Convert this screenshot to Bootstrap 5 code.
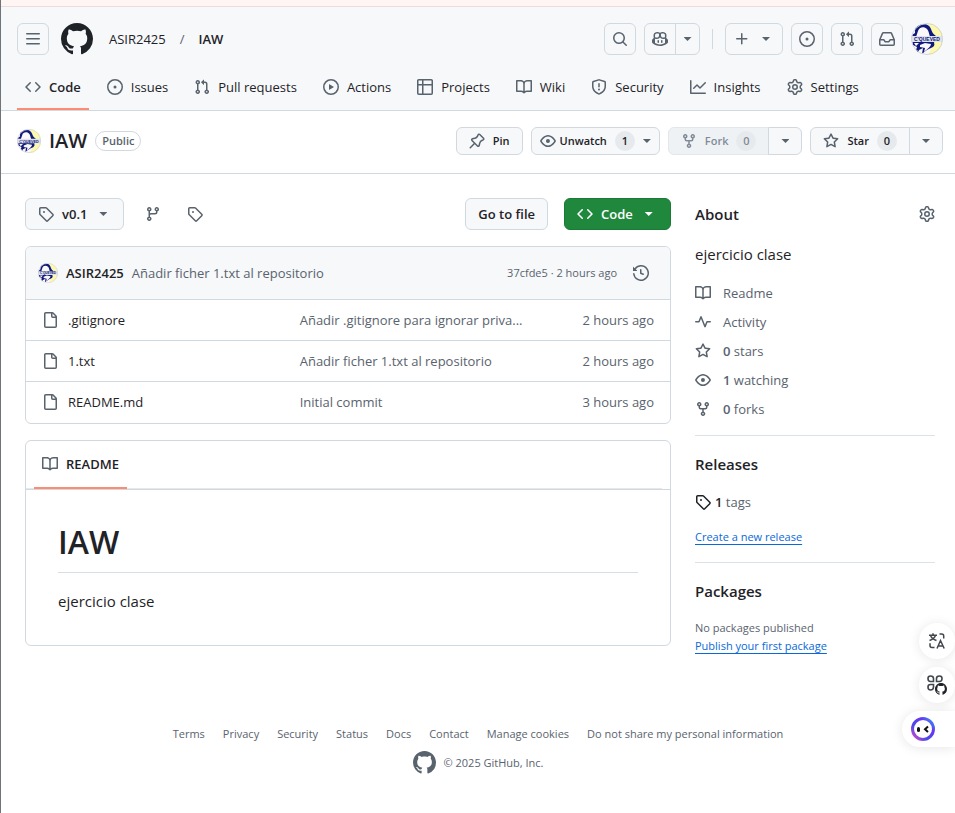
<!DOCTYPE html>
<html lang="en">
<head>
<meta charset="utf-8">
<meta name="viewport" content="width=device-width, initial-scale=1">
<title>ASIR2425/IAW</title>
<link href="https://cdn.jsdelivr.net/npm/bootstrap@5.3.0/dist/css/bootstrap.min.css" rel="stylesheet">
<style>
:root{--fg:#1f2328;--muted:#59636e;--line:#d1d9e0;--soft:#f6f8fa;--accent:#fd8c73;--link:#0969da}
body{font-family:"Open Sans","Noto Sans",sans-serif;font-size:13px;line-height:20px;color:var(--fg);background:#fff;min-height:100vh;border-left:1px solid #707478}
a{color:inherit;text-decoration:none}
svg{display:block;flex-shrink:0;fill:currentColor}
.ic{width:16px;height:16px}
.soft-fg{color:var(--muted)}
.strip{height:7px;background:#fff5f2;border-bottom:1px solid #ecdcdc}
.top-area{background:var(--soft);border-bottom:1px solid var(--line)}
.top-row{padding:16px 12px 10px 16px}
.home-link{margin-left:12px}
.slash{padding:0 14px}
.gh-btn{--bs-btn-padding-x:12px;--bs-btn-padding-y:0;--bs-btn-font-size:13px;--bs-btn-line-height:20px;--bs-btn-font-weight:600;--bs-btn-border-radius:6px;--bs-btn-color:var(--fg);--bs-btn-bg:var(--soft);--bs-btn-border-color:var(--line);--bs-btn-hover-bg:#eff2f5;--bs-btn-hover-border-color:var(--line);--bs-btn-disabled-bg:#eff2f5;--bs-btn-disabled-color:#818b98;--bs-btn-disabled-border-color:#e2e7eb;--bs-btn-disabled-opacity:1;display:inline-flex;align-items:center;justify-content:center;height:32px;white-space:nowrap}
.gh-btn .ic{color:var(--muted)}
.gh-btn:disabled .ic{color:#818b98}
.gh-sm{--bs-btn-font-size:11px;height:28px}
.gh-icon{--bs-btn-padding-x:0;width:32px}
.gh-narrow{--bs-btn-padding-x:0;width:25px}
.gh-arrow{--bs-btn-padding-x:0;width:34px}
.gh-create{gap:12px;padding-left:8px}
.gh-green{--bs-btn-color:#fff;--bs-btn-bg:#1f883d;--bs-btn-border-color:#1a7a36;--bs-btn-hover-color:#fff;--bs-btn-hover-bg:#1c8139;width:107px;justify-content:flex-start}
.gh-green .ic,.gh-green .caret{color:#fff}
.caret{width:8px;height:4px;background:currentColor;clip-path:polygon(0 0,100% 0,50% 100%);color:var(--muted)}
.count{min-width:20px;height:20px;border-radius:10px;background:#e6eaed;text-align:center;padding:0 6px}
.vline{width:1px;height:20px;background:var(--line)}
.repo-tabs{padding:0 8px 0 16px;gap:10px}
.repo-tabs a{display:flex;align-items:center;gap:8px;height:45px;padding:0 8px;border-bottom:2px solid transparent}
.repo-tabs a.current{border-color:var(--accent);font-weight:600}
.repo-tabs .ic{color:var(--muted)}
.repo-head{padding:16px 12px 18px 16px;border-bottom:1px solid var(--line)}
.repo-name{font-size:20px;line-height:28px;font-weight:600}
.pill{border:1px solid var(--line);border-radius:10px;padding:0 6px;line-height:18px;font-size:11px;font-weight:600;color:var(--muted)}
.main-area{padding:24px 20px 0 24px;gap:24px}
.side{width:240px;flex-shrink:0}
.ref-link{width:42px;display:flex;justify-content:center}
.box{border:1px solid var(--line);border-radius:6px}
.commit-row{background:var(--soft);border-radius:5px 5px 0 0;padding:16px 21px 16px 12px}
.fs-tiny{font-size:11px;line-height:18px}
.files{width:100%;table-layout:fixed}
.files td{height:41px;border-top:1px solid var(--line);padding:0;white-space:nowrap}
.col-name{width:42.5%}.col-age{width:20%}
.files .name-cell{padding-left:16px}
.name-cell a{display:flex;align-items:center;gap:10px}
.files .age-cell{padding-right:16px;text-align:right}
.rm-head{border-bottom:1px solid var(--line);padding-left:8px;padding-right:8px}
.rm-tabs{border-bottom:1px solid #e4e9ed;margin-left:-8px;padding-left:8px}
.rm-tabs a{display:inline-flex;align-items:center;gap:8px;height:48px;padding:0 8px;border-bottom:2px solid var(--accent);margin-bottom:-1px;font-weight:600}
.rm-body{padding:32px}
.rm-body h1{font-size:32px;line-height:40px;font-weight:600;padding-bottom:10px;border-bottom:1px solid #d8dee4;margin:0 0 16px}
.fs-mid{font-size:15px;line-height:24px}
.about-text{margin:16px 0 17px}
.side h2{font-size:15px;line-height:24px;font-weight:600;margin:0}
.side-part{border-top:1px solid #dde2e7;padding-top:16px;margin-top:16px}
.facts{gap:9px}
.facts a{display:flex;gap:12px;align-items:center}
.u-link{color:var(--link);text-decoration:underline;text-underline-offset:3px}
.foot{padding:70px 0 40px}
.foot nav{gap:18px}
.float-dock{position:fixed;right:0;top:623px;width:53px}
.bubble{display:flex;align-items:center;justify-content:center;border:0;background:#fff;padding:0;width:36px;height:36px;border-radius:18px;box-shadow:0 1px 12px rgba(0,0,0,.1);color:#42474d}
.bubble.wide{width:53px;border-radius:18px 0 0 18px;justify-content:flex-start;padding-left:8px}
.line-art{fill:none;stroke:currentColor;stroke-width:1.5}
</style>
</head>
<body>
<svg width="0" height="0" class="position-absolute" aria-hidden="true">
<defs>
<linearGradient id="ring" x1="0" y1="1" x2="1" y2="0"><stop offset="0" stop-color="#e645c8"/><stop offset=".35" stop-color="#4a4ae8"/><stop offset=".7" stop-color="#6a35f2"/><stop offset="1" stop-color="#2aa5f5"/></linearGradient>
<clipPath id="round"><circle cx="16" cy="16" r="16"/></clipPath>
</defs>
<symbol id="bars" viewBox="0 0 16 16"><path d="M1 2.75A.75.75 0 0 1 1.75 2h12.5a.75.75 0 0 1 0 1.5H1.75A.75.75 0 0 1 1 2.75Zm0 5A.75.75 0 0 1 1.75 7h12.5a.75.75 0 0 1 0 1.5H1.75A.75.75 0 0 1 1 7.75ZM1.75 12h12.5a.75.75 0 0 1 0 1.5H1.75a.75.75 0 0 1 0-1.5Z"/></symbol>
<symbol id="octocat" viewBox="0 0 16 16"><path d="M8 0c4.42 0 8 3.58 8 8a8.013 8.013 0 0 1-5.45 7.59c-.4.08-.55-.17-.55-.38 0-.27.01-1.13.01-2.2 0-.75-.25-1.23-.54-1.48 1.78-.2 3.65-.88 3.65-3.95 0-.88-.31-1.59-.82-2.15.08-.2.36-1.02-.08-2.12 0 0-.67-.22-2.2.82-.64-.18-1.32-.27-2-.27-.68 0-1.36.09-2 .27-1.53-1.03-2.2-.82-2.2-.82-.44 1.1-.16 1.92-.08 2.12-.51.56-.82 1.28-.82 2.15 0 3.06 1.86 3.75 3.64 3.95-.23.2-.44.55-.51 1.07-.46.21-1.61.55-2.33-.66-.15-.24-.6-.83-1.23-.82-.67.01-.27.38.01.53.34.19.73.9.82 1.13.16.45.68 1.31 2.69.94 0 .67.01 1.3.01 1.49 0 .21-.15.45-.55.38A7.995 7.995 0 0 1 0 8c0-4.42 3.58-8 8-8Z"/></symbol>
<symbol id="search" viewBox="0 0 16 16"><path d="M10.68 11.74a6 6 0 0 1-7.922-8.982 6 6 0 0 1 8.982 7.922l3.04 3.04a.749.749 0 0 1-.326 1.275.749.749 0 0 1-.734-.215ZM11.5 7a4.499 4.499 0 1 0-8.997 0A4.499 4.499 0 0 0 11.5 7Z"/></symbol>
<symbol id="copilot" viewBox="0 0 16 16"><path d="M7.998 15.035c-4.562 0-7.873-2.914-7.998-3.749V9.338c.085-.628.677-1.686 1.588-2.065.013-.07.024-.143.036-.218.029-.183.06-.384.126-.612-.201-.508-.254-1.084-.254-1.656 0-.87.128-1.769.693-2.484.579-.733 1.494-1.124 2.724-1.261 1.206-.134 2.262.034 2.944.765.05.053.096.108.139.165.044-.057.094-.112.143-.165.682-.731 1.738-.899 2.944-.765 1.23.137 2.145.528 2.724 1.261.566.715.693 1.614.693 2.484 0 .572-.053 1.148-.254 1.656.066.228.098.429.126.612.012.076.024.148.037.218.924.385 1.522 1.471 1.591 2.095v1.872c0 .766-3.351 3.795-8.002 3.795Zm0-1.485c2.28 0 4.584-1.11 5.002-1.433V7.862l-.023-.116c-.49.21-1.075.291-1.727.291-1.146 0-2.059-.327-2.71-.991A3.222 3.222 0 0 1 8 6.303a3.24 3.24 0 0 1-.544.743c-.65.664-1.563.991-2.71.991-.652 0-1.236-.081-1.727-.291l-.023.116v4.255c.419.323 2.722 1.433 5.002 1.433ZM6.762 2.83c-.193-.206-.637-.413-1.682-.297-1.019.113-1.479.404-1.713.7-.247.312-.369.789-.369 1.554 0 .793.129 1.171.308 1.371.162.181.519.379 1.442.379.853 0 1.339-.235 1.638-.54.315-.322.527-.827.617-1.553.117-.935-.037-1.395-.241-1.614Zm4.155-.297c-1.044-.116-1.488.091-1.681.297-.204.219-.359.679-.242 1.614.091.726.303 1.231.618 1.553.299.305.784.54 1.638.54.922 0 1.28-.198 1.442-.379.179-.2.308-.578.308-1.371 0-.765-.123-1.242-.37-1.554-.233-.296-.693-.587-1.713-.7ZM6.25 9.037a.75.75 0 0 1 .75.75v1.501a.75.75 0 0 1-1.5 0V9.787a.75.75 0 0 1 .75-.75Zm4.25.75v1.501a.75.75 0 0 1-1.5 0V9.787a.75.75 0 0 1 1.5 0Z"/></symbol>
<symbol id="plus" viewBox="0 0 16 16"><path d="M7.75 2a.75.75 0 0 1 .75.75V7h4.25a.75.75 0 0 1 0 1.5H8.5v4.25a.75.75 0 0 1-1.5 0V8.5H2.75a.75.75 0 0 1 0-1.5H7V2.75A.75.75 0 0 1 7.75 2Z"/></symbol>
<symbol id="issue" viewBox="0 0 16 16"><path d="M8 9.5a1.5 1.5 0 1 0 0-3 1.5 1.5 0 0 0 0 3Z"/><path d="M8 0a8 8 0 1 1 0 16A8 8 0 0 1 8 0ZM1.5 8a6.5 6.5 0 1 0 13 0 6.5 6.5 0 0 0-13 0Z"/></symbol>
<symbol id="pull" viewBox="0 0 16 16"><path d="M1.5 3.25a2.25 2.25 0 1 1 3 2.122v5.256a2.251 2.251 0 1 1-1.5 0V5.372A2.25 2.25 0 0 1 1.5 3.25Zm5.677-.177L9.573.677A.25.25 0 0 1 10 .854V2.5h1A2.5 2.5 0 0 1 13.5 5v5.628a2.251 2.251 0 1 1-1.5 0V5a1 1 0 0 0-1-1h-1v1.646a.25.25 0 0 1-.427.177L7.177 3.427a.25.25 0 0 1 0-.354ZM3.75 2.5a.75.75 0 1 0 0 1.5.75.75 0 0 0 0-1.5Zm0 9.5a.75.75 0 1 0 0 1.5.75.75 0 0 0 0-1.5Zm8.25.75a.75.75 0 1 0 1.5 0 .75.75 0 0 0-1.5 0Z"/></symbol>
<symbol id="inbox" viewBox="0 0 16 16"><path d="M2.8 2.06A1.75 1.75 0 0 1 4.41 1h7.18c.7 0 1.333.417 1.61 1.06l2.74 6.395c.04.093.06.194.06.295v4.5A1.75 1.75 0 0 1 14.25 15H1.75A1.75 1.75 0 0 1 0 13.25v-4.5c0-.101.02-.202.06-.295Zm1.61.44a.25.25 0 0 0-.23.152L1.887 8H4.75a.75.75 0 0 1 .6.3L6.625 10h2.75l1.275-1.7a.75.75 0 0 1 .6-.3h2.863L11.82 2.652a.25.25 0 0 0-.23-.152Zm10.09 7h-2.875l-1.275 1.7a.75.75 0 0 1-.6.3h-3.5a.75.75 0 0 1-.6-.3L4.375 9.5H1.5v3.75c0 .138.112.25.25.25h12.5a.25.25 0 0 0 .25-.25Z"/></symbol>
<symbol id="code" viewBox="0 0 16 16"><path d="m11.28 3.22 4.25 4.25a.75.75 0 0 1 0 1.06l-4.25 4.25a.749.749 0 0 1-1.275-.326.749.749 0 0 1 .215-.734L13.94 8l-3.72-3.72a.749.749 0 0 1 .326-1.275.749.749 0 0 1 .734.215Zm-6.56 0a.751.751 0 0 1 1.042.018.751.751 0 0 1 .018 1.042L2.06 8l3.72 3.72a.749.749 0 0 1-.326 1.275.749.749 0 0 1-.734-.215L.47 8.53a.75.75 0 0 1 0-1.06Z"/></symbol>
<symbol id="play" viewBox="0 0 16 16"><path d="M8 0a8 8 0 1 1 0 16A8 8 0 0 1 8 0ZM1.5 8a6.5 6.5 0 1 0 13 0 6.5 6.5 0 0 0-13 0Zm4.879-2.773 4.264 2.559a.25.25 0 0 1 0 .428l-4.264 2.559A.25.25 0 0 1 6 10.559V5.442a.25.25 0 0 1 .379-.215Z"/></symbol>
<symbol id="grid" viewBox="0 0 16 16"><path d="M0 1.75C0 .784.784 0 1.75 0h12.5C15.216 0 16 .784 16 1.75v12.5A1.75 1.75 0 0 1 14.25 16H1.75A1.75 1.75 0 0 1 0 14.25ZM6.5 6.5v8h7.75a.25.25 0 0 0 .25-.25V6.5Zm8-1.5V1.75a.25.25 0 0 0-.25-.25H6.5V5Zm-13 1.5v7.75c0 .138.112.25.25.25H5v-8ZM5 5V1.5H1.75a.25.25 0 0 0-.25.25V5Z"/></symbol>
<symbol id="book" viewBox="0 0 16 16"><path d="M0 1.75A.75.75 0 0 1 .75 1h4.253c1.227 0 2.317.59 3 1.501A3.743 3.743 0 0 1 11.006 1h4.245a.75.75 0 0 1 .75.75v10.5a.75.75 0 0 1-.75.75h-4.507a2.25 2.25 0 0 0-1.591.659l-.622.621a.75.75 0 0 1-1.06 0l-.622-.621A2.25 2.25 0 0 0 5.258 13H.75a.75.75 0 0 1-.75-.75Zm7.251 10.324.004-5.073-.002-2.253A2.25 2.25 0 0 0 5.003 2.5H1.5v9h3.757a3.75 3.75 0 0 1 1.994.574ZM8.755 4.75l-.004 7.322a3.752 3.752 0 0 1 1.992-.572H14.5v-9h-3.495a2.25 2.25 0 0 0-2.25 2.25Z"/></symbol>
<symbol id="shield" viewBox="0 0 16 16"><path d="M7.467.133a1.748 1.748 0 0 1 1.066 0l5.25 1.68A1.75 1.75 0 0 1 15 3.48V7c0 1.566-.32 3.182-1.303 4.682-.983 1.498-2.585 2.813-5.032 3.855a1.697 1.697 0 0 1-1.33 0c-2.447-1.042-4.049-2.357-5.032-3.855C1.32 10.182 1 8.566 1 7V3.48a1.75 1.75 0 0 1 1.217-1.667Zm.61 1.429a.25.25 0 0 0-.153 0l-5.25 1.68a.25.25 0 0 0-.174.238V7c0 1.358.275 2.666 1.057 3.86.784 1.194 2.121 2.34 4.366 3.297a.196.196 0 0 0 .154 0c2.245-.956 3.582-2.104 4.366-3.298C13.225 9.666 13.5 8.36 13.5 7V3.48a.251.251 0 0 0-.174-.237l-5.25-1.68ZM8.75 4.75v3a.75.75 0 0 1-1.5 0v-3a.75.75 0 0 1 1.5 0ZM9 10.5a1 1 0 1 1-2 0 1 1 0 0 1 2 0Z"/></symbol>
<symbol id="graph" viewBox="0 0 16 16"><path d="M1.5 1.75V13.5h13.75a.75.75 0 0 1 0 1.5H.75a.75.75 0 0 1-.75-.75V1.75a.75.75 0 0 1 1.5 0Zm14.28 2.53-5.25 5.25a.75.75 0 0 1-1.06 0L7 7.06 4.28 9.78a.751.751 0 0 1-1.042-.018.751.751 0 0 1-.018-1.042l3.25-3.25a.75.75 0 0 1 1.06 0L10 7.94l4.72-4.72a.751.751 0 0 1 1.042.018.751.751 0 0 1 .018 1.042Z"/></symbol>
<symbol id="gear" viewBox="0 0 16 16"><path d="M8 0a8.2 8.2 0 0 1 .701.031C9.444.095 9.99.645 10.16 1.29l.288 1.107c.018.066.079.158.212.224.231.114.454.243.668.386.123.082.233.09.299.071l1.103-.303c.644-.176 1.392.021 1.82.63.27.385.506.792.704 1.218.315.675.111 1.422-.364 1.891l-.814.806c-.049.048-.098.147-.088.294.016.257.016.515 0 .772-.01.147.038.246.088.294l.814.806c.475.469.679 1.216.364 1.891a7.977 7.977 0 0 1-.704 1.217c-.428.61-1.176.807-1.82.63l-1.102-.302c-.067-.019-.177-.011-.3.071a5.909 5.909 0 0 1-.668.386c-.133.066-.194.158-.211.224l-.29 1.106c-.168.646-.715 1.196-1.458 1.26a8.006 8.006 0 0 1-1.402 0c-.743-.064-1.289-.614-1.458-1.26l-.289-1.106c-.018-.066-.079-.158-.212-.224a5.738 5.738 0 0 1-.668-.386c-.123-.082-.233-.09-.299-.071l-1.103.303c-.644.176-1.392-.021-1.82-.63a8.12 8.12 0 0 1-.704-1.218c-.315-.675-.111-1.422.363-1.891l.815-.806c.05-.048.098-.147.088-.294a6.214 6.214 0 0 1 0-.772c.01-.147-.038-.246-.088-.294l-.815-.806C.635 6.045.431 5.298.746 4.623a7.92 7.92 0 0 1 .704-1.217c.428-.61 1.176-.807 1.82-.63l1.102.302c.067.019.177.011.3-.071.214-.143.437-.272.668-.386.133-.066.194-.158.211-.224l.29-1.106C6.009.645 6.556.095 7.299.03 7.53.01 7.764 0 8 0Zm-.571 1.525c-.036.003-.108.036-.137.146l-.289 1.105c-.147.561-.549.967-.998 1.189-.173.086-.34.183-.5.29-.417.278-.97.423-1.529.27l-1.103-.303c-.109-.03-.175.016-.195.045-.22.312-.412.644-.573.99-.014.031-.021.11.059.19l.815.806c.411.406.562.957.53 1.456a4.709 4.709 0 0 0 0 .582c.032.499-.119 1.05-.53 1.456l-.815.806c-.081.08-.073.159-.059.19.162.346.353.677.573.989.02.03.085.076.195.046l1.102-.303c.56-.153 1.113-.008 1.53.27.161.107.328.204.501.29.447.222.85.629.997 1.189l.289 1.105c.029.109.101.143.137.146a6.6 6.6 0 0 0 1.142 0c.036-.003.108-.036.137-.146l.289-1.105c.147-.561.549-.967.998-1.189.173-.086.34-.183.5-.29.417-.278.97-.423 1.529-.27l1.103.303c.109.029.175-.016.195-.045.22-.313.411-.644.573-.99.014-.031.021-.11-.059-.19l-.815-.806c-.411-.406-.562-.957-.53-1.456a4.709 4.709 0 0 0 0-.582c-.032-.499.119-1.05.53-1.456l.815-.806c.081-.08.073-.159.059-.19a6.464 6.464 0 0 0-.573-.989c-.02-.03-.085-.076-.195-.046l-1.102.303c-.56.153-1.113.008-1.53-.27a4.44 4.44 0 0 0-.501-.29c-.447-.222-.85-.629-.997-1.189l-.289-1.105c-.029-.11-.101-.143-.137-.146a6.6 6.6 0 0 0-1.142 0ZM11 8a3 3 0 1 1-6 0 3 3 0 0 1 6 0ZM9.5 8a1.5 1.5 0 1 0-3.001.001A1.5 1.5 0 0 0 9.5 8Z"/></symbol>
<symbol id="pin" viewBox="0 0 16 16"><path d="m11.294.984 3.722 3.722a1.75 1.75 0 0 1-.504 2.826l-1.327.613a3.089 3.089 0 0 0-1.707 2.084l-.584 2.454c-.317 1.332-1.972 1.8-2.94.832L5.75 11.311 1.78 15.28a.749.749 0 1 1-1.06-1.06l3.969-3.97-2.204-2.204c-.968-.968-.5-2.623.832-2.94l2.454-.584a3.08 3.08 0 0 0 2.084-1.707l.613-1.327a1.75 1.75 0 0 1 2.826-.504ZM6.283 9.723l2.732 2.731a.25.25 0 0 0 .42-.119l.584-2.454a4.586 4.586 0 0 1 2.537-3.098l1.328-.613a.25.25 0 0 0 .072-.404l-3.722-3.722a.25.25 0 0 0-.404.072l-.613 1.328a4.584 4.584 0 0 1-3.098 2.537l-2.454.584a.25.25 0 0 0-.119.42l2.731 2.732Z"/></symbol>
<symbol id="eye" viewBox="0 0 16 16"><path d="M8 2c1.981 0 3.671.992 4.933 2.078 1.27 1.091 2.187 2.345 2.637 3.023a1.62 1.62 0 0 1 0 1.798c-.45.678-1.367 1.932-2.637 3.023C11.67 13.008 9.981 14 8 14c-1.981 0-3.671-.992-4.933-2.078C1.797 10.83.88 9.576.43 8.898a1.62 1.62 0 0 1 0-1.798c.45-.677 1.367-1.931 2.637-3.022C4.33 2.992 6.019 2 8 2ZM1.679 7.932a.12.12 0 0 0 0 .136c.411.622 1.241 1.75 2.366 2.717C5.176 11.758 6.527 12.5 8 12.5c1.473 0 2.825-.742 3.955-1.715 1.124-.967 1.954-2.096 2.366-2.717a.12.12 0 0 0 0-.136c-.412-.621-1.242-1.75-2.366-2.717C10.824 4.242 9.473 3.5 8 3.5c-1.473 0-2.825.742-3.955 1.715-1.124.967-1.954 2.096-2.366 2.717ZM8 10a2 2 0 1 1-.001-3.999A2 2 0 0 1 8 10Z"/></symbol>
<symbol id="fork" viewBox="0 0 16 16"><path d="M5 5.372v.878c0 .414.336.75.75.75h4.5a.75.75 0 0 0 .75-.75v-.878a2.25 2.25 0 1 1 1.5 0v.878a2.25 2.25 0 0 1-2.25 2.25h-1.5v2.128a2.251 2.251 0 1 1-1.5 0V8.5h-1.5A2.25 2.25 0 0 1 3.5 6.25v-.878a2.25 2.25 0 1 1 1.5 0ZM5 3.25a.75.75 0 1 0-1.5 0 .75.75 0 0 0 1.5 0Zm6.75.75a.75.75 0 1 0 0-1.5.75.75 0 0 0 0 1.5Zm-3 8.75a.75.75 0 1 0-1.5 0 .75.75 0 0 0 1.5 0Z"/></symbol>
<symbol id="star" viewBox="0 0 16 16"><path d="M8 .25a.75.75 0 0 1 .673.418l1.882 3.815 4.21.612a.75.75 0 0 1 .416 1.279l-3.046 2.97.719 4.192a.751.751 0 0 1-1.088.791L8 12.347l-3.766 1.98a.75.75 0 0 1-1.088-.79l.72-4.194L.818 6.374a.75.75 0 0 1 .416-1.28l4.21-.611L7.327.668A.75.75 0 0 1 8 .25Zm0 2.445L6.615 5.5a.75.75 0 0 1-.564.41l-3.097.45 2.24 2.184a.75.75 0 0 1 .216.664l-.528 3.084 2.769-1.456a.75.75 0 0 1 .698 0l2.77 1.456-.53-3.084a.75.75 0 0 1 .216-.664l2.24-2.183-3.096-.45a.75.75 0 0 1-.564-.41L8 2.694Z"/></symbol>
<symbol id="tag" viewBox="0 0 16 16"><path d="M1 7.775V2.75C1 1.784 1.784 1 2.75 1h5.025c.464 0 .91.184 1.238.513l6.25 6.25a1.75 1.75 0 0 1 0 2.474l-5.026 5.026a1.75 1.75 0 0 1-2.474 0l-6.25-6.25A1.752 1.752 0 0 1 1 7.775Zm1.5 0c0 .066.026.13.073.177l6.25 6.25a.25.25 0 0 0 .354 0l5.025-5.025a.25.25 0 0 0 0-.354l-6.25-6.25a.25.25 0 0 0-.177-.073H2.75a.25.25 0 0 0-.25.25ZM6 5a1 1 0 1 1 0 2 1 1 0 0 1 0-2Z"/></symbol>
<symbol id="branch" viewBox="0 0 16 16"><path d="M9.5 3.25a2.25 2.25 0 1 1 3 2.122V6A2.5 2.5 0 0 1 10 8.5H6a1 1 0 0 0-1 1v1.128a2.251 2.251 0 1 1-1.5 0V5.372a2.25 2.25 0 1 1 1.5 0v1.836A2.493 2.493 0 0 1 6 7h4a1 1 0 0 0 1-1v-.628A2.25 2.25 0 0 1 9.5 3.25Zm-6 0a.75.75 0 1 0 1.5 0 .75.75 0 0 0-1.5 0Zm8.25-.75a.75.75 0 1 0 0 1.5.75.75 0 0 0 0-1.5ZM4.25 12a.75.75 0 1 0 0 1.5.75.75 0 0 0 0-1.5Z"/></symbol>
<symbol id="history" viewBox="0 0 16 16"><path d="m.427 1.927 1.215 1.215a8.002 8.002 0 1 1-1.6 5.685.75.75 0 1 1 1.493-.154 6.5 6.5 0 1 0 1.18-4.458l1.358 1.358A.25.25 0 0 1 3.896 6H.25A.25.25 0 0 1 0 5.75V2.104a.25.25 0 0 1 .427-.177ZM7.75 4a.75.75 0 0 1 .75.75v2.992l2.028.812a.75.75 0 0 1-.557 1.392l-2.5-1A.751.751 0 0 1 7 8.25v-3.5A.75.75 0 0 1 7.75 4Z"/></symbol>
<symbol id="file" viewBox="0 0 16 16"><path d="M2 1.75C2 .784 2.784 0 3.75 0h6.586c.464 0 .909.184 1.237.513l2.914 2.914c.329.328.513.773.513 1.237v9.586A1.75 1.75 0 0 1 13.25 16h-9.5A1.75 1.75 0 0 1 2 14.25Zm1.75-.25a.25.25 0 0 0-.25.25v12.5c0 .138.112.25.25.25h9.5a.25.25 0 0 0 .25-.25V6h-2.75A1.75 1.75 0 0 1 9 4.25V1.5Zm6.75.062V4.25c0 .138.112.25.25.25h2.688l-.011-.013-2.914-2.914-.013-.011Z"/></symbol>
<symbol id="pulse" viewBox="0 0 16 16"><path d="M6 2c.306 0 .582.187.696.471L10 10.731l1.304-3.26A.751.751 0 0 1 12 7h3.25a.75.75 0 0 1 0 1.5h-2.742l-1.812 4.528a.751.751 0 0 1-1.392 0L6 4.77 4.696 8.03A.75.75 0 0 1 4 8.5H.75a.75.75 0 0 1 0-1.5h2.742l1.812-4.529A.751.751 0 0 1 6 2Z"/></symbol>
<symbol id="avatar" viewBox="0 0 32 32"><g clip-path="url(#round)"><path fill="#fbf8fb" d="M0 0h32v32H0z"/><path fill="#fdf8ac" d="M16 0h16v32H17l5-10V10z"/><path fill="#101a78" d="M4 5C9-1 18 0 20 6c1 3 2 5 5 7l-2 7c1 2 0 4-3 5-3 1-6 3-9 6l1-6-4 2-1 3-2-3 1-3-4-2-2-6 1-4 3-2z"/><path fill="#fbf8fb" d="M7 8c1-4 6-5 9-2 2 2 2 5 3 8H5zM9 22l5-2 6 1c0 3-4 5-7 8l1-4-5-1zM3 20h5l-3 3z"/><path fill="#dfe2ee" d="M0 13h32v6H0z"/><text x="16" y="18" text-anchor="middle" font-family="Liberation Sans,sans-serif" font-size="5" font-weight="700" fill="#101a78">C'QUEVED</text></g><circle cx="16" cy="16" r="15.5" fill="none" stroke="#d0d5dc"/></symbol>
</svg>

<div class="strip"></div>
<header class="top-area">
  <div class="top-row d-flex align-items-center">
    <button class="btn gh-btn gh-icon" aria-label="Open menu"><svg class="ic"><use href="#bars"/></svg></button>
    <a href="#" class="home-link" aria-label="Home"><svg width="32" height="32"><use href="#octocat"/></svg></a>
    <nav class="d-flex ms-3 align-items-center" aria-label="Breadcrumb"><a href="#">ASIR2425</a><span class="soft-fg slash">/</span><a href="#" class="fw-semibold">IAW</a></nav>
    <div class="ms-auto d-flex align-items-center gap-2">
      <button class="btn gh-btn gh-icon" aria-label="Search"><svg class="ic"><use href="#search"/></svg></button>
      <div class="btn-group">
        <button class="btn gh-btn gh-icon" aria-label="Copilot"><svg class="ic"><use href="#copilot"/></svg></button>
        <button class="btn gh-btn gh-narrow" aria-label="Copilot options"><span class="caret"></span></button>
      </div>
      <span class="vline mx-1"></span>
      <button class="btn gh-btn gh-create" aria-label="Create new"><svg class="ic"><use href="#plus"/></svg><span class="caret"></span></button>
      <button class="btn gh-btn gh-icon" aria-label="Issues"><svg class="ic"><use href="#issue"/></svg></button>
      <button class="btn gh-btn gh-icon" aria-label="Pull requests"><svg class="ic"><use href="#pull"/></svg></button>
      <button class="btn gh-btn gh-icon" aria-label="Inbox"><svg class="ic"><use href="#inbox"/></svg></button>
      <a href="#" aria-label="Profile"><svg width="32" height="32"><use href="#avatar"/></svg></a>
    </div>
  </div>
  <nav class="repo-tabs d-flex" aria-label="Repository">
    <a href="#" class="current"><svg class="ic"><use href="#code"/></svg>Code</a>
    <a href="#"><svg class="ic"><use href="#issue"/></svg>Issues</a>
    <a href="#"><svg class="ic"><use href="#pull"/></svg>Pull requests</a>
    <a href="#"><svg class="ic"><use href="#play"/></svg>Actions</a>
    <a href="#"><svg class="ic"><use href="#grid"/></svg>Projects</a>
    <a href="#"><svg class="ic"><use href="#book"/></svg>Wiki</a>
    <a href="#"><svg class="ic"><use href="#shield"/></svg>Security</a>
    <a href="#"><svg class="ic"><use href="#graph"/></svg>Insights</a>
    <a href="#"><svg class="ic"><use href="#gear"/></svg>Settings</a>
  </nav>
</header>

<section class="repo-head d-flex align-items-center">
  <svg width="24" height="24"><use href="#avatar"/></svg>
  <a href="#" class="repo-name mx-2">IAW</a>
  <span class="pill">Public</span>
  <div class="ms-auto d-flex gap-2">
    <button class="btn gh-btn gh-sm gap-2"><svg class="ic"><use href="#pin"/></svg>Pin</button>
    <button class="btn gh-btn gh-sm gap-1 px-2"><svg class="ic"><use href="#eye"/></svg>Unwatch<span class="count mx-1">1</span><span class="caret"></span></button>
    <div class="btn-group">
      <button class="btn gh-btn gh-sm gap-2" disabled><svg class="ic"><use href="#fork"/></svg>Fork<span class="count">0</span></button>
      <button class="btn gh-btn gh-sm gh-arrow" aria-label="Fork options"><span class="caret"></span></button>
    </div>
    <div class="btn-group">
      <button class="btn gh-btn gh-sm gap-2"><svg class="ic"><use href="#star"/></svg>Star<span class="count">0</span></button>
      <button class="btn gh-btn gh-sm gh-arrow" aria-label="Star lists"><span class="caret"></span></button>
    </div>
  </div>
</section>

<div class="main-area d-flex align-items-start">
  <main class="flex-grow-1">
    <div class="d-flex align-items-center mb-3">
      <button class="btn gh-btn gap-2"><svg class="ic"><use href="#tag"/></svg>v0.1<span class="caret mx-1"></span></button>
      <a href="#" class="soft-fg ref-link ms-2" aria-label="Branches"><svg class="ic"><use href="#branch"/></svg></a>
      <a href="#" class="soft-fg ref-link" aria-label="Tags"><svg class="ic"><use href="#tag"/></svg></a>
      <button class="btn gh-btn ms-auto me-3">Go to file</button>
      <button class="btn gh-btn gh-green gap-2"><svg class="ic"><use href="#code"/></svg>Code<span class="caret ms-1"></span></button>
    </div>
    <div class="box mb-3">
      <div class="commit-row d-flex align-items-center gap-2">
        <svg width="20" height="20"><use href="#avatar"/></svg>
        <a href="#" class="fw-semibold">ASIR2425</a>
        <a href="#" class="soft-fg">Añadir ficher 1.txt al repositorio</a>
        <span class="soft-fg fs-tiny ms-auto me-2">37cfde5 · 2 hours ago</span>
        <a href="#" class="soft-fg" aria-label="History"><svg class="ic"><use href="#history"/></svg></a>
      </div>
      <table class="files">
        <colgroup><col class="col-name"><col><col class="col-age"></colgroup>
        <tbody>
        <tr><td class="name-cell"><a href="#"><svg class="ic soft-fg"><use href="#file"/></svg>.gitignore</a></td><td class="soft-fg">Añadir .gitignore para ignorar priva...</td><td class="age-cell soft-fg">2 hours ago</td></tr>
        <tr><td class="name-cell"><a href="#"><svg class="ic soft-fg"><use href="#file"/></svg>1.txt</a></td><td class="soft-fg">Añadir ficher 1.txt al repositorio</td><td class="age-cell soft-fg">2 hours ago</td></tr>
        <tr><td class="name-cell"><a href="#"><svg class="ic soft-fg"><use href="#file"/></svg>README.md</a></td><td class="soft-fg">Initial commit</td><td class="age-cell soft-fg">3 hours ago</td></tr>
        </tbody>
      </table>
    </div>
    <div class="box">
      <div class="rm-head"><nav class="rm-tabs d-flex" aria-label="Repository files"><a href="#"><svg class="ic soft-fg"><use href="#book"/></svg>README</a></nav></div>
      <article class="rm-body"><h1>IAW</h1><p class="fs-mid m-0">ejercicio clase</p></article>
    </div>
  </main>
  <aside class="side">
    <div class="d-flex justify-content-between align-items-center pt-1"><h2>About</h2><a href="#" class="soft-fg" aria-label="Edit details"><svg class="ic"><use href="#gear"/></svg></a></div>
    <p class="fs-mid about-text">ejercicio clase</p>
    <div class="facts d-flex flex-column soft-fg">
      <a href="#"><svg class="ic"><use href="#book"/></svg>Readme</a>
      <a href="#"><svg class="ic"><use href="#pulse"/></svg>Activity</a>
      <a href="#"><svg class="ic"><use href="#star"/></svg><span><b class="fw-semibold">0</b> stars</span></a>
      <a href="#"><svg class="ic"><use href="#eye"/></svg><span><b class="fw-semibold">1</b> watching</span></a>
      <a href="#"><svg class="ic"><use href="#fork"/></svg><span><b class="fw-semibold">0</b> forks</span></a>
    </div>
    <div class="side-part">
      <h2>Releases</h2>
      <a href="#" class="d-flex align-items-center gap-1 mt-3"><svg class="ic"><use href="#tag"/></svg><span><b class="fw-semibold">1</b> <span class="soft-fg">tags</span></span></a>
      <a href="#" class="u-link fs-tiny d-inline-block mt-3">Create a new release</a>
    </div>
    <div class="side-part">
      <h2>Packages</h2>
      <div class="fs-tiny mt-3"><div class="soft-fg">No packages published</div><a href="#" class="u-link">Publish your first package</a></div>
    </div>
  </aside>
</div>

<footer class="foot soft-fg fs-tiny">
  <nav class="d-flex justify-content-center" aria-label="Footer"><a href="#">Terms</a><a href="#">Privacy</a><a href="#">Security</a><a href="#">Status</a><a href="#">Docs</a><a href="#">Contact</a><a href="#">Manage cookies</a><a href="#">Do not share my personal information</a></nav>
  <div class="d-flex justify-content-center align-items-center gap-2 mt-2"><svg width="23" height="23"><use href="#octocat"/></svg><span>© 2025 GitHub, Inc.</span></div>
</footer>

<div class="float-dock d-flex flex-column align-items-end gap-2">
  <button class="bubble" aria-label="Translate"><svg class="line-art" width="16" height="16" viewBox="0 0 16 16"><path d="M0 2.2h8M4 .2v2M1.500 2.500C2.500 5 4.500 6.500 7.500 7.500M6.500 2.500C5.500 5 3.500 6.500.5 7.500M10.500 1h2.200q2 0 2 2v2.500M1 10.200V12.500q0 2 2 2h2.500M8 15.500l3.500-8 3.700 8M9.300 13h4.500"/></svg></button>
  <button class="bubble" aria-label="Apps"><svg width="20" height="20" viewBox="0 0 20 20"><g fill="none" stroke="currentColor" stroke-width="1.600"><path d="M1 3.500Q1 1 3.500 1 6.500 1 6.500 3.500V6.500H3.500Q1 6.500 1 3.500ZM9.500 3.500Q9.500 1 12.500 1 15 1 15 3.500 15 6.500 12.500 6.500H9.500ZM1 12Q1 9.500 3.500 9.500H6.500V12Q6.500 15 3.500 15 1 15 1 12Z"/></g><circle cx="14" cy="14" r="6" fill="#fff"/><svg x="8" y="8" width="12" height="12"><use href="#octocat" fill="#1f2328"/></svg></svg></button>
  <button class="bubble wide" aria-label="Assistant"><svg width="26" height="26" viewBox="0 0 26 26"><circle cx="13" cy="13" r="10.500" fill="none" stroke="url(#ring)" stroke-width="3"/><rect x="7" y="11" width="3" height="5" rx="1.500" fill="#111"/><path d="M18 10.500l-3 2.700 3 2.700" fill="none" stroke="#111" stroke-width="2"/></svg></button>
</div>
<script src="https://cdn.jsdelivr.net/npm/bootstrap@5.3.0/dist/js/bootstrap.bundle.min.js"></script>
</body>
</html>
